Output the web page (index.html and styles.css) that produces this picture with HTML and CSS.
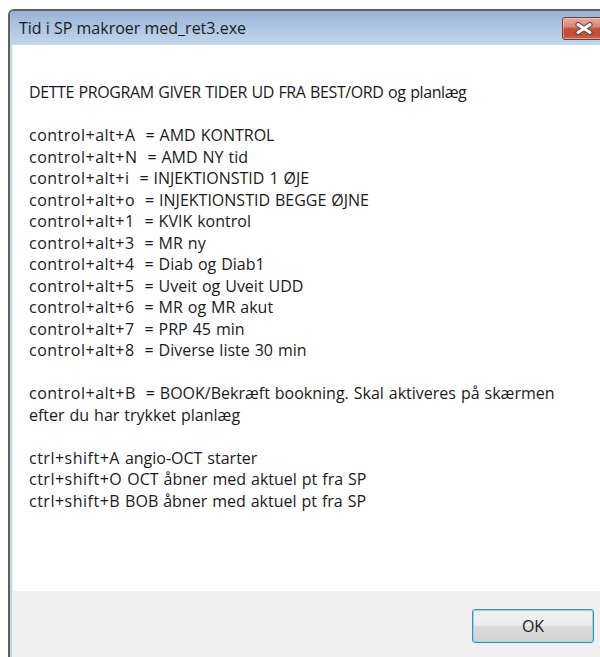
FILE: index.html
```html
<!DOCTYPE html>
<html lang="da">
<head>
<meta charset="utf-8">
<title>Tid i SP makroer med_ret3.exe</title>
<link rel="stylesheet" href="styles.css">
</head>
<body>
<div class="window">
  <div class="titlebar">
    <span class="caption">Tid i SP makroer med_ret3.exe</span>
    <button class="close" aria-label="Luk">
      <svg width="18" height="13" viewBox="0 0 18 13">
        <path d="M3 2.5 L15 10.5 M15 2.5 L3 10.5" stroke="#4a4a4a" stroke-width="5" stroke-linecap="round"/>
        <path d="M3 2.5 L15 10.5 M15 2.5 L3 10.5" stroke="#ffffff" stroke-width="3" stroke-linecap="round"/>
      </svg>
    </button>
  </div>
  <div class="client">
    <p class="heading">DETTE PROGRAM GIVER TIDER UD FRA BEST/ORD og planlæg</p>
    <ul class="shortcuts">
      <li><span class="keys">control+alt+A</span>  = AMD KONTROL</li>
      <li><span class="keys">control+alt+N</span>  = AMD NY tid</li>
      <li><span class="keys">control+alt+i</span>  = INJEKTIONSTID 1 ØJE</li>
      <li><span class="keys">control+alt+o</span>  = INJEKTIONSTID BEGGE ØJNE</li>
      <li><span class="keys">control+alt+1</span>  = KVIK kontrol</li>
      <li><span class="keys">control+alt+3</span>  = MR ny</li>
      <li><span class="keys">control+alt+4</span>  = Diab og Diab1</li>
      <li><span class="keys">control+alt+5</span>  = Uveit og Uveit UDD</li>
      <li><span class="keys">control+alt+6</span>  = MR og MR akut</li>
      <li><span class="keys">control+alt+7</span>  = PRP 45 min</li>
      <li><span class="keys">control+alt+8</span>  = Diverse liste 30 min</li>
    </ul>
    <p class="note"><span class="keys">control+alt+B</span>  = BOOK/Bekræft bookning. Skal aktiveres på skærmen<br>efter du har trykket planlæg</p>
    <ul class="shortcuts">
      <li><span class="keys">ctrl+shift+A</span> angio-OCT starter</li>
      <li><span class="keys">ctrl+shift+O</span> OCT åbner med aktuel pt fra SP</li>
      <li><span class="keys">ctrl+shift+B</span> BOB åbner med aktuel pt fra SP</li>
    </ul>
  </div>
  <div class="footer">
    <button class="ok">OK</button>
  </div>
</div>
</body>
</html>
```
FILE: styles.css
```css
html, body {
  margin: 0;
  padding: 0;
  overflow: hidden;
  background: #ffffff;
}

body {
  width: 600px;
  height: 657px;
  font-family: "Open Sans", "Noto Sans", sans-serif;
}

.window {
  margin: 9px 0 0 8px;
  width: 602px;
  height: 660px;
  display: flex;
  flex-direction: column;
  border-top: 2px solid #5f5f5f;
  border-left: 2px solid #5f5f5f;
  border-top-left-radius: 6px;
  background: #c4d6ec;
  box-sizing: border-box;
}

.titlebar {
  height: 34px;
  flex: none;
  display: flex;
  align-items: flex-start;
  justify-content: space-between;
  background: linear-gradient(to bottom, #97b3d5 0%, #aec6e2 50%, #c2d6ec 100%);
  border-top-left-radius: 4px;
}

.caption {
  margin: 7px 0 0 9px;
  font-size: 16px;
  line-height: 20px;
  color: #1b1b1b;
}

.close {
  margin: 6px 5px 0 0;
  width: 43px;
  height: 23px;
  padding: 0;
  display: flex;
  align-items: center;
  justify-content: center;
  border: 1px solid #743a34;
  border-radius: 3px;
  background: linear-gradient(to bottom, #e7aa9c 0%, #da8a78 40%, #c7503a 52%, #c44a33 80%, #cf6a4f 100%);
  box-shadow: inset 0 0 0 1px rgba(255, 220, 210, 0.45);
}

.close svg {
  display: block;
}

.client {
  flex: none;
  height: 546px;
  margin-left: 2px;
  border-left: 1px solid #eef3f9;
  background: #ffffff;
  padding: 37px 0 0 16px;
  box-sizing: border-box;
  font-size: 16px;
  line-height: 21.5px;
  color: #1a1a1a;
  word-spacing: 0.8px;
}

.heading,
.note,
.shortcuts {
  margin: 0 0 21.5px;
  padding: 0;
}

.heading,
.note,
.shortcuts li {
  white-space: pre;
}

.heading {
  letter-spacing: -0.4px;
}

.shortcuts {
  list-style: none;
}

.keys {
  letter-spacing: 0.5px;
}

.footer {
  flex: 1;
  margin-left: 2px;
  border-left: 1px solid #eef3f9;
  background: #f0f0f0;
  display: flex;
  justify-content: flex-end;
  align-items: flex-start;
  padding: 18px 16px 0 0;
}

.ok {
  width: 122px;
  height: 34px;
  padding: 0;
  border: 1px solid #3a8fcb;
  border-radius: 3px;
  box-shadow: inset 0 0 0 1px #8fd8f6;
  background: linear-gradient(to bottom, #f3f3f3 0%, #ebebeb 48%, #dcdcdc 52%, #d1d1d1 100%);
  font-family: "Open Sans", "Noto Sans", sans-serif;
  font-size: 16px;
  color: #1a1a1a;
}
```
